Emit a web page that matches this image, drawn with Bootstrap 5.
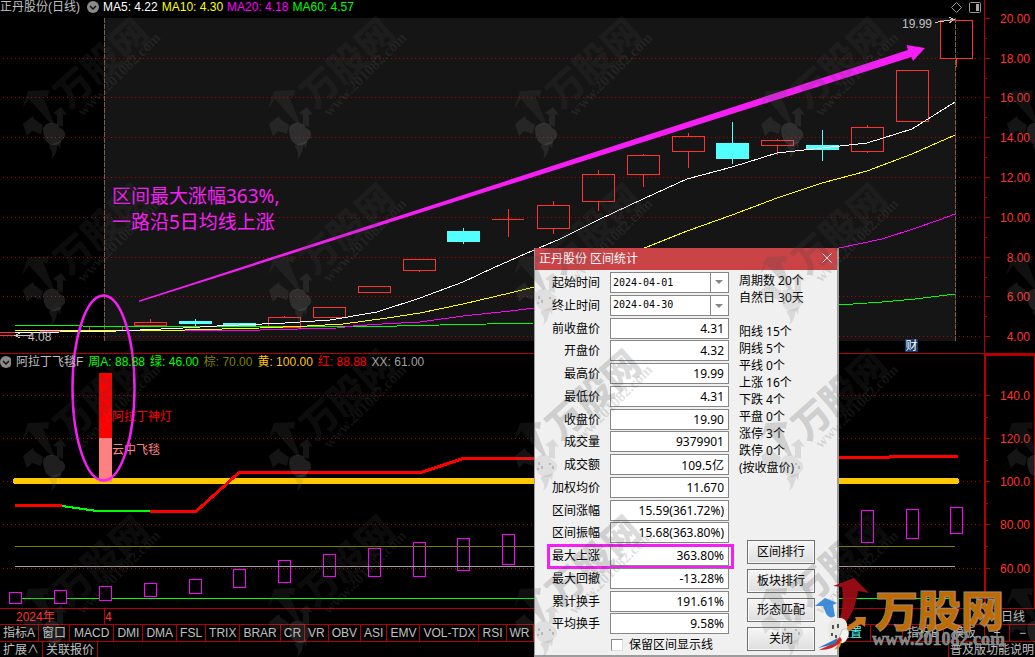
<!DOCTYPE html>
<html lang="zh-CN">
<head>
<meta charset="utf-8">
<meta name="viewport" content="width=device-width, initial-scale=1">
<title>正丹股份 区间统计</title>
<link rel="stylesheet" href="https://cdn.jsdelivr.net/npm/bootstrap@5.3.0/dist/css/bootstrap.min.css">
<style>
:root{--line:#b40000;--axis:#ff3232;--pink:#f51ff5}
body{background:#000;color:#c0c0c0;font:12px/16px "Liberation Sans","Noto Sans CJK SC",sans-serif;overflow-x:hidden}
svg text{font-family:"Liberation Sans","Noto Sans CJK SC",sans-serif}
.pane{display:grid;border-bottom:1px solid var(--line)}
.pane>*{grid-area:1/1;min-width:0}
.pane>svg{width:100%;height:auto;display:block}
.legend-bar{height:16px;z-index:1;white-space:nowrap;line-height:16px}
.price-legend{line-height:14px}
.legend-bar svg{flex:none}
.study-legend{gap:5px}
.grid-dots path{stroke:#b00000;stroke-dasharray:1 3;fill:none}
.ticks path{stroke:var(--line);fill:none}
.axis-text text{fill:var(--axis);font-size:12px;text-anchor:end}
.up rect,.up path{fill:none;stroke:#ff3232}
.down rect{fill:#54ffff}.down path{stroke:#54ffff}
.avg polyline{fill:none;stroke-width:1}
.osc rect{fill:none;stroke:#f0f}
.date-row{height:16px;border-bottom:1px solid var(--line);color:var(--axis)}
.date-row .month{border-left:1px solid var(--line)}
.date-row .year{width:104px}
.date-row .period{width:51px;border-left:1px solid var(--line);color:#c0c0c0}
.tab-row{height:17px;border-bottom:1px solid var(--line)}
.tab-row a,.foot-row a{color:#c0c0c0;text-decoration:none;border-right:1px solid var(--line);padding:0 3px;white-space:nowrap;line-height:16px;text-align:center}
.tab-row .tool-links a{width:41px}.tab-row .tool-links .zoom-link{width:25px}.tab-row .tool-links .blank-link{width:32px}
.tab-row .tool-links a:last-child{border-right:0}
.tab-row .wide-tab{padding:0 4px}
.foot-row{height:16px}
.foot-row .help-link{border-left:1px solid var(--line);border-right:0;width:87px;padding:0 1px;line-height:17px}
.layer{position:absolute;left:0;top:0;width:100%;height:auto;pointer-events:none}
.stat-win{position:absolute;left:534px;top:248px;width:305px;background:#f0f0f0;color:#000;border:solid #9c9c9c;border-width:0 2px 2px 1px;font-family:"Noto Sans","Noto Sans CJK SC",sans-serif}
.stat-win header{background:#c94347;color:#fff;height:22px;padding:0 4px}
.stat-win header h1{font-size:12px;line-height:22px;margin:0;font-weight:400}
.close-x{background:none;border:0;padding:0;width:12px;height:20px;line-height:0;color:#fff}
.win-body{padding:2px 8px 2px 4px;gap:10px}
.fields{width:190px}
.field-grid{display:grid;grid-template-rows:repeat(16,1fr);height:364px}
.field-line{display:grid;grid-template-columns:61px 119px;column-gap:10px;position:relative;align-items:start}
.field-line label{text-align:right;line-height:22px;white-space:nowrap}
.field-line input,.field-line select{height:21px;width:119px;border:1px solid #868686;background:#fff;color:#000;border-radius:0;padding:0 4px;text-align:right;font:12px/19px "Noto Sans","Noto Sans CJK SC",sans-serif}
.field-line select{appearance:none;text-align:left;font:10px/18px "DejaVu Sans Mono",monospace;padding:0 2px}
.combo{position:relative;height:21px}
.combo svg{position:absolute;right:0;top:0;pointer-events:none}
.field-line.marked::after{content:"";position:absolute;left:8px;top:-1px;width:187px;height:25px;border:3px solid var(--pink)}
.keep-line{height:17px;padding-left:72px;gap:6px;white-space:nowrap}
.keep-line input{appearance:none;width:12px;height:12px;margin:0;background:#fff;border:1px solid #888;border-right-color:#ddd;border-bottom-color:#ddd}
.side{flex:1}
.side p{margin:0;line-height:17px;white-space:nowrap}
.side .tally{padding-top:17px}
.side .cmds{margin:auto 0 2px 8px;gap:5px}
.cmds .btn{width:68px;height:24px;padding:0;font-size:12px;line-height:22px;border:1px solid #707070;border-radius:0;background:linear-gradient(#f6f6f6,#dedede);color:#000;box-shadow:inset 0 0 0 1px #fafafa}
</style>
</head>
<body>
<main class="position-relative">
<section class="pane">
<svg viewBox="0 0 1035 353" shape-rendering="crispEdges" role="img" aria-label="日线">
<rect x="104" y="18" width="852" height="323" fill="#151515"/>
<g class="grid-dots"><path d="M3 58.5H981M3 97.5H981M3 137.5H981M3 177.5H981M3 217.5H981M3 257.5H981M3 296.5H981M3 336.5H981"/></g>
<g class="ticks"><path d="M984.500 0V353M985 18.500H990M985 58.500H990M985 97.500H990M985 137.500H990M985 177.500H990M985 217.500H990M985 257.500H990M985 296.500H990M985 336.500H990M985 38.500H987M985 78.500H987M985 117.500H987M985 157.500H987M985 197.500H987M985 237.500H987M985 277.500H987M985 316.500H987"/></g>
<g class="axis-text"><text x="1030" y="23">20.00</text><text x="1030" y="63">18.00</text><text x="1030" y="102">16.00</text><text x="1030" y="142">14.00</text><text x="1030" y="182">12.00</text><text x="1030" y="222">10.00</text><text x="1030" y="262">8.00</text><text x="1030" y="301">6.00</text><text x="1030" y="341">4.00</text></g>
<path d="M0 332.500H31.500M0 335.500H31.500V332.500" fill="none" stroke="#ff3232"/>
<g class="up">
<rect x="89.500" y="326.500" width="33" height="4"/>
<rect x="134.500" y="322.500" width="32" height="3"/><path d="M150.500 319V322"/>
<rect x="268.500" y="317.500" width="32" height="10"/><path d="M284.500 316V317"/>
<rect x="313.500" y="307.500" width="32" height="10"/>
<rect x="358.500" y="286.500" width="32" height="6"/>
<rect x="403.500" y="259.500" width="32" height="11"/><path d="M419.500 271V272"/>
<path d="M492 219.500H524M508.500 209V237"/>
<rect x="537.500" y="205.500" width="32" height="23"/><path d="M553.500 201V205M553.500 229V234"/>
<rect x="582.500" y="174.500" width="32" height="27"/><path d="M598.500 170V174M598.500 202V211"/>
<rect x="627.500" y="155.500" width="32" height="19"/><path d="M643.500 154V155M643.500 175V187"/>
<rect x="672.500" y="136.500" width="32" height="15"/><path d="M688.500 133V136M688.500 152V168"/>
<rect x="761.500" y="140.500" width="32" height="5"/><path d="M777.500 139V140M777.500 146V155"/>
<rect x="851.500" y="127.500" width="32" height="24"/><path d="M867.500 125V127M867.500 152V153"/>
<rect x="896.500" y="70.500" width="32" height="51"/>
<rect x="940.500" y="20.500" width="32" height="38" style="fill:#000"/><path d="M956.500 59V67"/>
</g>
<g class="down">
<rect x="179" y="321" width="33" height="3"/><path d="M195.500 319V326"/>
<rect x="223" y="323" width="33" height="3"/>
<rect x="447" y="231" width="33" height="11"/><path d="M463.500 228V244"/>
<rect x="716" y="143" width="33" height="16"/><path d="M732.500 122V164"/>
<rect x="806" y="145" width="33" height="5"/><path d="M822.500 130V161"/>
</g>
<path d="M104.500 18V341M955.500 18V341" stroke="#815b43" stroke-dasharray="5 1"/>
<g class="avg">
<polyline stroke="#0f0" points="15,325 82,325 83,326 190,326 260,327 397,326 440,325 487,324 534,323 610,320 740,313 839,305 882,302 915,299 955,294"/>
<polyline stroke="#f0f" points="40,332 105,331 260,330 337,328 353,326 382,324 420,322 463,316 510,311 534,308 620,295 740,271 839,248 882,239 913,229 939,220 955,214"/>
<polyline stroke="#ff0" points="15,330 185,330 260,328 307,326 343,324 387,318 420,313 463,304 510,293 534,287 590,268 647,247 687,231 732,215 777,198 822,183 867,171 912,154 955,135"/>
<polyline stroke="#fff" points="15,333 60,332 117,331 140,330 183,328 217,326 262,324 285,323 330,320 377,312 420,298 463,282 493,268 534,250 560,239 598,220 643,199 687,179 732,167 777,153 822,148 867,143 912,129 955,102"/>
</g>
<g fill="none" stroke="#c8c8c8"><path d="M15 335.500H30M20 333L15 335.500L20 338M935 22.500L953 19.500M949 17L954 19.500L949 23"/></g>
<text x="28" y="341" font-size="12" fill="#c0c0c0">4.08</text>
<text x="902" y="28" font-size="12" fill="#c0c0c0">19.99</text>
<rect x="905" y="339" width="13" height="13" fill="#103a68"/><text x="905.500" y="350" font-size="12" fill="#fff">财</text>
<g fill="none" stroke="#999" shape-rendering="auto"><path d="M956.500 2.500L961.500 7.500L956.500 12.500L951.500 7.500Z"/><rect x="969.500" y="2.500" width="11" height="10" rx="1"/></g><path d="M976 4h3v7h-3z" fill="#aaa"/>
</svg>
<div class="legend-bar price-legend d-flex align-items-start">
<span style="width:86px">正丹股份(日线)</span>
<svg width="13" height="15" viewBox="0 0 13 15" class="me-1"><circle cx="7" cy="7" r="6" fill="#8a8a8a"/><path d="M4 6l3 3 3-3" fill="none" stroke="#111" stroke-width="1.500"/></svg>
<span class="d-flex gap-1"><span style="color:#fff">MA5: 4.22</span><span style="color:#ff0">MA10: 4.30</span><span style="color:#f0f">MA20: 4.18</span><span style="color:#0f0">MA60: 4.57</span></span>
</div>
</section>

<section class="pane">
<svg viewBox="0 354 1035 254" shape-rendering="crispEdges" role="img" aria-label="阿拉丁飞毯">
<g class="grid-dots"><path d="M3 395.500H981M3 438.500H981M3 481.500H981M3 524.500H981M3 568.500H981"/></g>
<g class="ticks"><path stroke-width="2" d="M985 608V355H1035V608"/><path d="M986 395.500H990M986 438.500H990M986 481.500H990M986 524.500H990M986 568.500H990M986 417.500H988M986 460.500H988M986 503.500H988M986 546.500H988"/></g>
<g class="axis-text"><text x="1030" y="400">140.0</text><text x="1030" y="443">120.0</text><text x="1030" y="486">100.0</text><text x="1030" y="529">80.00</text><text x="1030" y="573">60.00</text></g>
<path d="M15 598.500H955" stroke="#0f0"/><path d="M15 546.500H955" stroke="#808000"/>
<path d="M16 481H956" stroke="#ffc800" stroke-width="6" stroke-linecap="round"/>
<rect x="99" y="373" width="13" height="65" fill="red"/><rect x="99" y="438" width="13" height="44" fill="#ff8080"/>
<g fill="none" stroke-width="3"><path stroke="red" d="M15 505.500H62M150 511.500H196L239 472.500H421L463 458.500H700L839 457.500H889L890 456.500H958"/><path stroke="#0f0" stroke-width="2" d="M62 506L97 511H150"/></g>
<g class="osc"><rect x="9.500" y="592.500" width="12" height="11" style="fill:#000"/><rect x="54.500" y="590.500" width="12" height="13" style="fill:#000"/><rect x="99.500" y="586.500" width="12" height="14" style="fill:#000"/><rect x="144.500" y="583.500" width="12" height="13"/><rect x="189.500" y="579.500" width="12" height="14"/><rect x="233.500" y="569.500" width="12" height="18"/><rect x="278.500" y="560.500" width="12" height="22"/><rect x="323.500" y="554.500" width="12" height="22"/><rect x="368.500" y="548.500" width="12" height="28"/><rect x="413.500" y="542.500" width="12" height="34"/><rect x="457.500" y="538.500" width="12" height="32"/><rect x="502.500" y="534.500" width="12" height="30"/><rect x="861.500" y="510.500" width="12" height="32"/><rect x="906.500" y="509.500" width="12" height="29"/><rect x="950.500" y="507.500" width="12" height="26"/></g>
<path d="M15 566.500H955" stroke="#a0a0a0"/>
<text x="112" y="421" font-size="12" fill="red">阿拉丁神灯</text><text x="112" y="454" font-size="12" fill="#ff8080">云中飞毯</text>
</svg>
<div class="legend-bar study-legend d-flex align-items-start">
<svg width="11" height="15" viewBox="0 0 11 15"><circle cx="6" cy="8" r="6" fill="#8a8a8a"/><path d="M3 7l3 3 3-3" fill="none" stroke="#111" stroke-width="1.500"/></svg>
<span>阿拉丁飞毯F</span><span style="color:#0f0">周A: 88.88</span><span style="color:#0f0">绿: 46.00</span><span style="color:#808000">棕: 70.00</span><span style="color:#ffc800">黄: 100.00</span><span style="color:red">红: 88.88</span><span style="color:#a0a0a0">XX: 61.00</span>
</div>
</section>

<div class="date-row d-flex"><span class="year ps-3">2024年</span><span class="month flex-grow-1 ps-0">4</span><span class="period ps-3">日线</span></div>
<nav class="tab-row d-flex">
<a href="#">指标A</a><a href="#">窗口</a><a href="#" class="wide-tab">MACD</a><a href="#">DMI</a><a href="#">DMA</a><a href="#">FSL</a><a href="#">TRIX</a><a href="#">BRAR</a><a href="#">CR</a><a href="#">VR</a><a href="#">OBV</a><a href="#">ASI</a><a href="#">EMV</a><a href="#">VOL-TDX</a><a href="#">RSI</a><a href="#">WR</a>
<span class="tool-links d-flex ms-auto"><a href="#" style="color:#54ffff">设置</a><a href="#" class="blank-link" aria-label="更多"></a><a href="#">指标B</a><a href="#">模板</a><a href="#" class="zoom-link">+</a><a href="#" class="zoom-link">−</a></span>
</nav>
<footer class="foot-row d-flex"><a href="#">扩展∧</a><a href="#">关联报价</a><a href="#" class="help-link ms-auto">普及版功能说明</a></footer>

<svg class="layer" viewBox="0 0 1035 657" aria-hidden="true">
<path d="M139 300.500L908 50L906.500 45L925 48L913 61L911.500 57L139 302Z" fill="#f51ff5"/>
<ellipse cx="103.500" cy="388" rx="31" ry="92.500" fill="none" stroke="#f51ff5" stroke-width="2.500"/>
<g fill="#f51ff5" font-size="19"><text x="112" y="203" style="font-family:'Noto Sans','Noto Sans CJK SC',sans-serif">区间最大涨幅363%,</text><text x="112" y="229" style="font-family:'Noto Sans','Noto Sans CJK SC',sans-serif">一路沿5日均线上涨</text></g>
</svg>

<section class="stat-win" role="dialog" aria-labelledby="win-title">
<header class="d-flex justify-content-between"><h1 id="win-title">正丹股份 区间统计</h1><button class="close-x" aria-label="关闭窗口"><svg width="10" height="10" viewBox="0 0 10 10"><path d="M.5.5l9 9M9.500.5l-9 9" stroke="#fff"/></svg></button></header>
<div class="win-body d-flex">
<form class="fields">
<div class="field-grid">
<div class="field-line"><label for="f1">起始时间</label><div class="combo"><select id="f1"><option>2024-04-01</option></select><svg width="19" height="21"><path d="M.5 1v19" stroke="#868686"/><path d="M5 8h8l-4 4z" fill="#868686"/></svg></div></div>
<div class="field-line"><label for="f2">终止时间</label><div class="combo"><select id="f2"><option>2024-04-30</option></select><svg width="19" height="21"><path d="M.5 1v19" stroke="#868686"/><path d="M5 9h8l-4 4z" fill="#868686"/></svg></div></div>
<div class="field-line"><label for="f3">前收盘价</label><input id="f3" value="4.31"></div>
<div class="field-line"><label for="f4">开盘价</label><input id="f4" value="4.32"></div>
<div class="field-line"><label for="f5">最高价</label><input id="f5" value="19.99"></div>
<div class="field-line"><label for="f6">最低价</label><input id="f6" value="4.31"></div>
<div class="field-line"><label for="f7">收盘价</label><input id="f7" value="19.90"></div>
<div class="field-line"><label for="f8">成交量</label><input id="f8" value="9379901"></div>
<div class="field-line"><label for="f9">成交额</label><input id="f9" value="109.5亿"></div>
<div class="field-line"><label for="f10">加权均价</label><input id="f10" value="11.670"></div>
<div class="field-line"><label for="f11">区间涨幅</label><input id="f11" value="15.59(361.72%)"></div>
<div class="field-line"><label for="f12">区间振幅</label><input id="f12" value="15.68(363.80%)"></div>
<div class="field-line marked"><label for="f13">最大上涨</label><input id="f13" value="363.80%"></div>
<div class="field-line"><label for="f14">最大回撤</label><input id="f14" value="-13.28%"></div>
<div class="field-line"><label for="f15">累计换手</label><input id="f15" value="191.61%"></div>
<div class="field-line"><label for="f16">平均换手</label><input id="f16" value="9.58%"></div>
</div>
<div class="keep-line d-flex align-items-center"><input type="checkbox" id="keep"><label for="keep">保留区间显示线</label></div>
</form>
<div class="side d-flex flex-column">
<p>周期数 20个</p><p>自然日 30天</p>
<div class="tally"><p>阳线 15个</p><p>阴线 5个</p><p>平线 0个</p><p>上涨 16个</p><p>下跌 4个</p><p>平盘 0个</p><p>涨停 3个</p><p>跌停 0个</p><p>(按收盘价)</p></div>
<div class="cmds d-flex flex-column"><button class="btn">区间排行</button><button class="btn">板块排行</button><button class="btn">形态匹配</button><button class="btn">关闭</button></div>
</div>
</div>
</section>

<svg class="layer" viewBox="0 0 1035 657" aria-hidden="true">
<defs>
<g id="wm">
<g fill="#505050" fill-opacity=".2"><path d="M22 109L28 91L49 90L48 97L43 96L54 123L51 124L29 99Z"/></g>
<g fill="#777" fill-opacity=".18"><path d="M23 124L33 116L34 119L43 125L41 134L32 131L27 136ZM53 113L61 107L67 115L63 114L63 127L57 125L57 115ZM49 145C48 149 55 150 51 159C57 154 56 150 58 145L60 149L61 141Z"/></g>
<g fill="#999" fill-opacity=".2"><path d="M43 128C46 121 57 121 60 128C66 130 67 137 62 140C60 146 50 147 46 141C44 138 43 133 43 128Z"/></g>
<path d="M47 130v3M50 134v3M46 136v2M58 131v2M61 134v3" stroke="#222" stroke-opacity=".4"/>
<g fill="#404040" fill-opacity=".2"><text transform="translate(69 110) rotate(-42)" font-size="37" font-weight="900" style="font-family:'Noto Sans CJK SC',sans-serif">万股网</text></g>
<g fill="#606060" fill-opacity=".2"><text transform="translate(83 117) rotate(-45)" font-size="15" font-weight="700" style="font-family:'Liberation Serif',serif">www.201082.com</text></g>
</g>
</defs>
<use href="#wm"/><use href="#wm" x="246"/><use href="#wm" x="492"/><use href="#wm" x="738"/><use href="#wm" x="984"/>
<use href="#wm" y="166"/><use href="#wm" x="246" y="166"/><use href="#wm" x="492" y="166"/><use href="#wm" x="738" y="166"/><use href="#wm" x="984" y="166"/>
<use href="#wm" y="332"/><use href="#wm" x="246" y="332"/><use href="#wm" x="492" y="332"/><use href="#wm" x="738" y="332"/><use href="#wm" x="984" y="332"/>
<use href="#wm" y="498"/><use href="#wm" x="246" y="498"/><use href="#wm" x="492" y="498"/><use href="#wm" x="738" y="498"/><use href="#wm" x="984" y="498"/>
<g>
<path d="M833 586L854 578L869 593L858 591C856 604 852 615 846 622L840 618C843 609 843 598 842 587Z" fill="#9c0d14" fill-opacity=".94"/>
<path d="M815 606L825 598L837 603L833 605L835 616C831 619 827 617 825 611L823 606Z" fill="#3385d6" fill-opacity=".94"/>
<path d="M844 629L856 620L855 617L866 617L865 627L861 624L848 632Z" fill="#c8781a"/>
<path d="M828 627C829 619 839 615 845 620C849 624 847 633 843 639C839 645 832 643 829 638Z" fill="#e8e8e4"/>
<path d="M842 630C848 626 851 633 847 639C843 646 837 643 839 638Z" fill="#f4f4ef" stroke="#999" stroke-width=".5"/>
<path d="M833 625v4M838 624v4M832 633v3M836 635v3" stroke="#222" stroke-width="1.500"/>
<path d="M840 637C833 644 828 646 819 650C829 650 837 647 842 640Z" fill="#d51e26"/><path d="M838 638L818 648L835 644Z" fill="#287ac3"/><path d="M842 640L834 650L840 647Z" fill="#e38a15"/>
<text x="875" y="627" font-size="43" font-weight="900" fill="#c06b00" stroke="#a18d78" stroke-width="1" style="font-family:'Noto Sans CJK SC',sans-serif">万股网</text>
<text x="872" y="645" font-size="18" font-weight="700" fill="#808080" stroke="#a0a0a0" stroke-width=".5" style="font-family:'Liberation Serif',serif">www.201082.com</text>
</g>
</svg>
</main>
<script src="https://cdn.jsdelivr.net/npm/bootstrap@5.3.0/dist/js/bootstrap.bundle.min.js"></script>
</body>
</html>
